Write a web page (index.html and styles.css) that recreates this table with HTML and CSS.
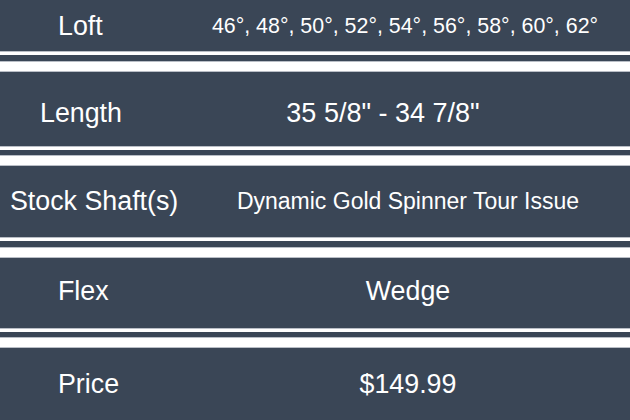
FILE: index.html
```html
<!DOCTYPE html>
<html lang="en">
<head>
<meta charset="utf-8">
<title>Wedge Specs</title>
<link rel="stylesheet" href="styles.css">
</head>
<body>
<div class="specs">
  <div class="row row--loft">
    <div class="label label--loft">Loft</div>
    <div class="value value--loft">46°, 48°, 50°, 52°, 54°, 56°, 58°, 60°, 62°</div>
  </div>
  <div class="sep"><div class="bar-thin"></div><div class="bar-thick"></div></div>
  <div class="row row--length">
    <div class="label label--length">Length</div>
    <div class="value value--length">35 5/8" - 34 7/8"</div>
  </div>
  <div class="sep sep--short"><div class="bar-thin"></div><div class="bar-thick"></div></div>
  <div class="row row--shaft">
    <div class="label label--shaft">Stock Shaft(s)</div>
    <div class="value value--shaft">Dynamic Gold Spinner Tour Issue</div>
  </div>
  <div class="sep"><div class="bar-thin"></div><div class="bar-thick"></div></div>
  <div class="row row--flex">
    <div class="label label--flex">Flex</div>
    <div class="value">Wedge</div>
  </div>
  <div class="sep sep--short"><div class="bar-thin"></div><div class="bar-thick"></div></div>
  <div class="row row--price">
    <div class="label label--price">Price</div>
    <div class="value">$149.99</div>
  </div>
</div>
</body>
</html>
```
FILE: styles.css
```css
html, body {
  margin: 0;
  padding: 0;
  background: #3a4656;
}
body {
  width: 630px;
  height: 420px;
  overflow: hidden;
  font-family: "Liberation Sans", Arial, sans-serif;
  color: #ffffff;
}
.specs {
  display: flex;
  flex-direction: column;
}
.row {
  display: flex;
  align-items: center;
  background: #3a4656;
  box-sizing: border-box;
}
.row--loft { height: 51px; padding-top: 1px; }
.row--length { height: 74px; padding-top: 9px; }
.row--shaft { height: 71px; }
.row--flex { height: 70px; padding-bottom: 4px; }
.row--price { height: 72px; }

.label {
  width: 186px;
  flex: none;
  box-sizing: border-box;
  font-size: 26.8px;
  white-space: nowrap;
}
.label--loft, .label--flex, .label--price { padding-left: 58px; }
.label--length { padding-left: 40px; }
.label--shaft { padding-left: 10px; }

.value {
  flex: 1;
  text-align: center;
  font-size: 26.8px;
  white-space: nowrap;
}
.value--loft { font-size: 21.4px; padding-right: 6px; }
.value--length { font-size: 27px; padding-right: 50px; }
.value--shaft { font-size: 23px; }

.sep {
  display: flex;
  flex-direction: column;
  height: 21px;
  background: #3a4656;
}
.sep--short { height: 20px; }
.bar-thin {
  height: 3px;
  background: #ffffff;
  border-top: 1px solid #b9bec6;
}
.bar-thick {
  margin-top: auto;
  height: 9px;
  background: #ffffff;
  border-top: 1px solid #b9bec6;
  border-bottom: 1px solid #b9bec6;
}
```
